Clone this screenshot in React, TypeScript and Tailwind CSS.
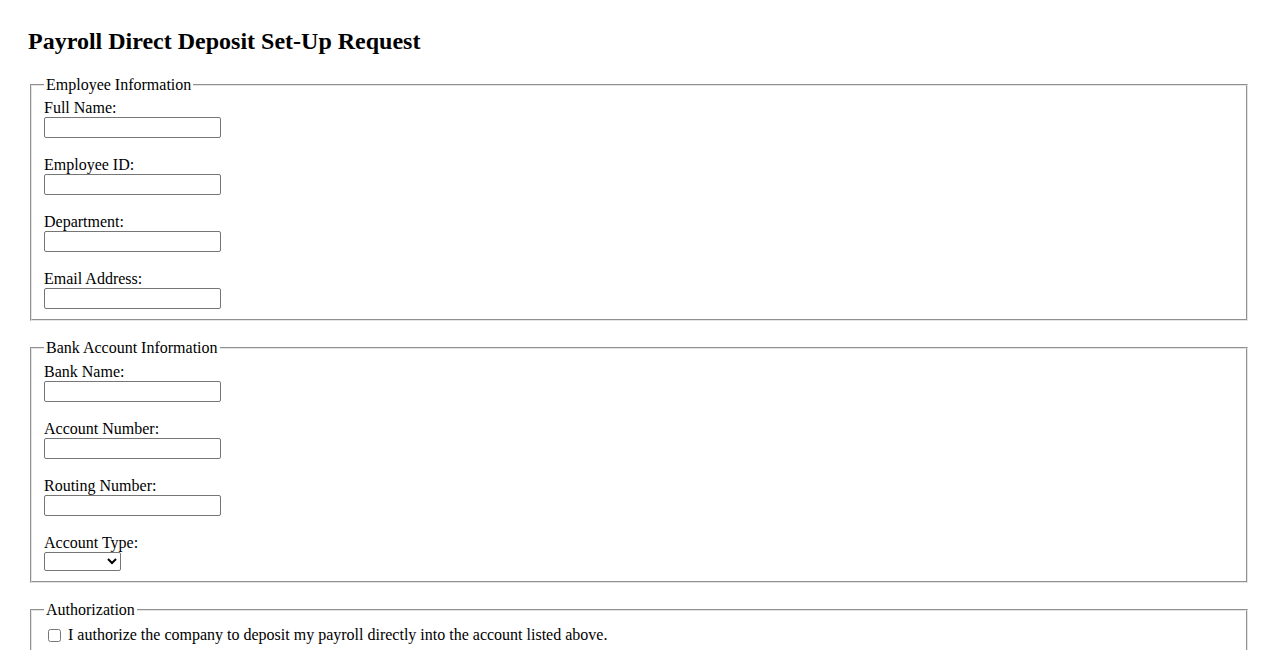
import { ReactNode } from 'react'

function Section({ legend, children }: { legend: string; children: ReactNode }) {
	return (
		<fieldset className="mx-[2px] mb-[18px] border-2 [border-style:groove] border-[#e4e4e4] px-[12px] pt-[5.6px] pb-[10px]">
			<legend className="px-[2px] leading-[18px]">{legend}</legend>
			{children}
		</fieldset>
	)
}

function Field({ label, last }: { label: string; last?: boolean }) {
	return (
		<div className={last ? '' : 'mb-[18px]'}>
			<label className="block leading-[18px]">{label}</label>
			<input
				type="text"
				className="block w-[177px] h-[21px] border border-[#767676] rounded-[2px] bg-white px-[2px] text-[13.33px]"
			/>
		</div>
	)
}

export default function App() {
	return (
		<div className="p-[28px] text-[16px] text-black bg-white [font-family:'Liberation_Serif','Times_New_Roman',serif]">
			<h2 className="text-[24px] font-bold leading-[27.6px] mb-[20px]">
				Payroll Direct Deposit Set-Up Request
			</h2>
			<form>
				<Section legend="Employee Information">
					<Field label="Full Name:" />
					<Field label="Employee ID:" />
					<Field label="Department:" />
					<Field label="Email Address:" last />
				</Section>
				<Section legend="Bank Account Information">
					<Field label="Bank Name:" />
					<Field label="Account Number:" />
					<Field label="Routing Number:" />
					<div>
						<label className="block leading-[18px]">Account Type:</label>
						<select className="block w-[77px] h-[19px] border border-[#767676] rounded-[2px] bg-white text-[13.33px]">
							<option value=""></option>
							<option value="checking">Checking</option>
							<option value="savings">Savings</option>
						</select>
					</div>
				</Section>
				<Section legend="Authorization">
					<div className="flex items-center leading-[18px] pt-[2px]">
						<input type="checkbox" className="ml-[4px] mr-[3px] w-[13px] h-[13px]" />
						<span className="ml-[4px]">
							I authorize the company to deposit my payroll directly into the account listed above.
						</span>
					</div>
				</Section>
			</form>
		</div>
	)
}
